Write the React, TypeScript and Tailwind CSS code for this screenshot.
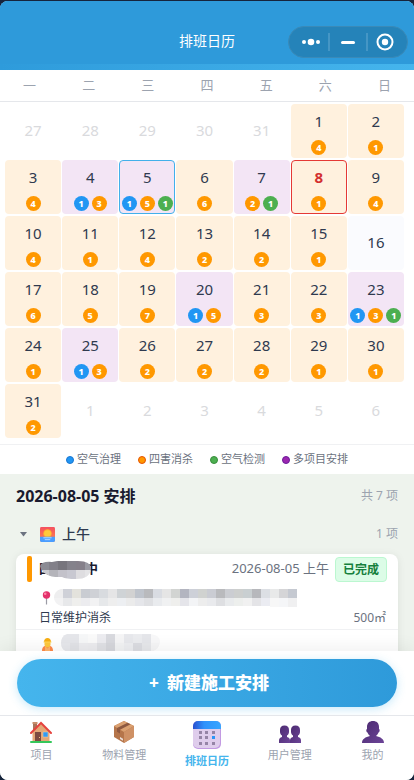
import React from "react";

type Kind = "air" | "pest" | "test";
type Tone = "out" | "none" | "single" | "multi";

type Day = {
  day: number;
  tone: Tone;
  badges: [Kind, number][];
  selected?: boolean;
  today?: boolean;
};

const weekdays = ["一", "二", "三", "四", "五", "六", "日"];

const out = (day: number): Day => ({ day, tone: "out", badges: [] });
const pest = (day: number, n: number): Day => ({ day, tone: "single", badges: [["pest", n]] });
const multi = (day: number, badges: [Kind, number][]): Day => ({ day, tone: "multi", badges });

const days: Day[] = [
  out(27), out(28), out(29), out(30), out(31), pest(1, 4), pest(2, 1),
  pest(3, 4),
  multi(4, [["air", 1], ["pest", 3]]),
  { ...multi(5, [["air", 1], ["pest", 5], ["test", 1]]), selected: true },
  pest(6, 6),
  multi(7, [["pest", 2], ["test", 1]]),
  { ...pest(8, 1), today: true },
  pest(9, 4),
  pest(10, 4), pest(11, 1), pest(12, 4), pest(13, 2), pest(14, 2), pest(15, 1),
  { day: 16, tone: "none", badges: [] },
  pest(17, 6), pest(18, 5), pest(19, 7),
  multi(20, [["air", 1], ["pest", 5]]),
  pest(21, 3), pest(22, 3),
  multi(23, [["air", 1], ["pest", 3], ["test", 1]]),
  pest(24, 1),
  multi(25, [["air", 1], ["pest", 3]]),
  pest(26, 2), pest(27, 2), pest(28, 2), pest(29, 1), pest(30, 1),
  pest(31, 2), out(1), out(2), out(3), out(4), out(5), out(6),
];

const badgeColor: Record<Kind, string> = {
  air: "bg-[#2196f3]",
  pest: "bg-[#ff9800]",
  test: "bg-[#4caf50]",
};

const toneColor: Record<Tone, string> = {
  out: "text-[#d9dadd]",
  none: "bg-[#fafbfe] text-[#2f3a4f]",
  single: "bg-[#fff1de] text-[#2f3a4f]",
  multi: "bg-[#f3e5f5] text-[#2f3a4f]",
};

const legend = [
  { label: "空气治理", color: "bg-[#2196f3] border-[#1976d2]" },
  { label: "四害消杀", color: "bg-[#ff9800] border-[#e65100]" },
  { label: "空气检测", color: "bg-[#4caf50] border-[#388e3c]" },
  { label: "多项目安排", color: "bg-[#9c27b0] border-[#6a1b9a]" },
];

function DayCell({ item }: { item: Day }) {
  const ring = item.today
    ? "border border-[#e53935] font-bold"
    : item.selected
      ? "border border-[#42b0ea]"
      : "border border-transparent";
  const color = item.today ? "bg-[#fff1de] text-[#d32f2f]" : toneColor[item.tone];
  return (
    <button
      type="button"
      className={`flex h-[54px] flex-col items-center rounded text-[15px] leading-5 ${ring} ${color} ${
        item.badges.length ? "justify-start pt-1.5" : "justify-center pb-[3px]"
      }`}
    >
      <span>{item.day}</span>
      {item.badges.length > 0 && (
        <span className="mt-[9px] flex gap-[3px]">
          {item.badges.map(([kind, n]) => (
            <span
              key={kind}
              className={`flex size-[15px] items-center justify-center rounded-full text-[9px] leading-none font-extrabold text-white ${badgeColor[kind]}`}
            >
              {n}
            </span>
          ))}
        </span>
      )}
    </button>
  );
}

function Mask({ cells, className, shape }: { cells: string[][]; className: string; shape: React.ReactNode }) {
  const id = React.useId();
  const w = cells[0].length * 9;
  return (
    <svg className={className} width={w} height="18" viewBox={`0 0 ${w} 18`} shapeRendering="crispEdges">
      <clipPath id={id}>{shape}</clipPath>
      <g clipPath={`url(#${id})`}>
        {cells.map((row, y) =>
          row.map((fill, x) => <rect key={`${x}-${y}`} x={x * 9} y={y * 9} width="9" height="9" fill={fill} />)
        )}
      </g>
    </svg>
  );
}

const nameCells = [
  ["#8b8b94", "#828089", "#77757d", "#84828b", "#85808a", "#9a9aa3"],
  ["#c9c9cf", "#b4b4ba", "#c3c2ca", "#c8c8d1", "#dedde0", "#e4e4e6"],
];

const addressCells = [
  [
    "#eeeeef", "#cfd1d8", "#e3e2dc", "#c9ccd2", "#cfd1d6", "#d8dbdf", "#e5e5e6", "#cfd3d6", "#d2d2d2",
    "#bfc4cc", "#b9babd", "#d9dce2", "#e5e5e5", "#d2d4d2", "#b3b5c0", "#cdd0d8", "#d0d2d0",
    "#caccd3", "#b9babd", "#cbcdd2", "#cdcfce", "#c9cfd1", "#b7b8bc", "#dcdfe4", "#e8e9e9", "#d5d5d7", "#c5c9d1",
  ],
  [
    "#f2f2f3", "#e7e8ea", "#efefed", "#ececef", "#f2f2f3", "#e6e8ea", "#eeeeee", "#edeff2", "#ebebeb",
    "#e5e6ea", "#dfe0e3", "#e9ebee", "#f0f1f2", "#efefed", "#e5e5ea", "#f3f4f6", "#ededed",
    "#e9eaed", "#dedfe2", "#e9ebed", "#edefed", "#f1f1f1", "#e4e4e7", "#ebecf2", "#f7f7f7", "#f5f6f8", "#f0f0f1",
  ],
];

const workerCells = [
  ["#e5e6ea", "#e5e6ea", "#f6f7f8", "#fafafa", "#ececf0", "#d8d9de", "#f5f5f6", "#e7e8ec", "#ebecef", "#e5e6ea", "#f8f8f9"],
  ["#e7e8ec", "#e2e3e7", "#ededf0", "#ececef", "#e0e1e5", "#d6d7dc", "#f2f3f4", "#edeef1", "#dcdde2", "#e7e8eb", "#f6f6f7"],
];

function Sunrise() {
  return (
    <svg width="15" height="15" viewBox="0 0 32 32" aria-hidden="true">
      <defs>
        <linearGradient id="sky" x1="0" y1="0" x2="0" y2="1">
          <stop offset="0" stopColor="#f4505f" />
          <stop offset="1" stopColor="#ff8a4c" />
        </linearGradient>
      </defs>
      <rect width="32" height="32" rx="3" fill="url(#sky)" />
      <circle cx="16" cy="14" r="9" fill="#ffb02e" />
      <circle cx="16" cy="14" r="7" fill="#ffc93c" />
      <path d="M0 21h32v8a3 3 0 0 1-3 3H3a3 3 0 0 1-3-3z" fill="#4a9dff" />
      <path d="M8 23h16M11 27h10" stroke="#b9dcff" strokeWidth="2" strokeLinecap="round" />
    </svg>
  );
}

function Pin() {
  return (
    <svg width="9" height="14" viewBox="0 0 9 14" aria-hidden="true">
      <path d="M4.5 6v7.5" stroke="#9b9ba5" strokeWidth="1.2" />
      <circle cx="4.5" cy="4" r="3.7" fill="#e3316b" />
      <circle cx="3.2" cy="2.8" r="1.3" fill="#ff86a8" />
    </svg>
  );
}

function Worker() {
  return (
    <svg width="11" height="13" viewBox="0 0 22 26" aria-hidden="true">
      <path d="M0 26c0-8 4-11 11-11s11 3 11 11z" fill="#ff8a4a" />
      <path d="M6 16l5 5 5-5v10H6z" fill="#ffb46b" />
      <path d="M5 8h12v5c0 4-3 6-6 6s-6-2-6-6z" fill="#ffc83d" />
      <path d="M4 8c0-5 3-8 7-8s7 3 7 8z" fill="#f7ae12" />
      <path d="M3 7h16v2H3z" fill="#ffd95a" />
    </svg>
  );
}

function House() {
  return (
    <svg width="22" height="22" viewBox="0 0 22 22" aria-hidden="true">
      <path d="M3 1h4v8H3z" fill="#a9745a" />
      <path d="M2.5 1h5v2h-5z" fill="#c78e6c" />
      <path d="M2.5 11L11 3l8.500 8v10h-17z" fill="#e3a876" />
      <path d="M1 12L11 2l10 10" fill="none" stroke="#e5433d" strokeWidth="2" strokeLinecap="round" />
      <path d="M5 11h6v9H5z" fill="#7d4b40" />
      <path d="M9 16h1v1H9z" fill="#f0c080" />
      <path d="M13 11h5v5h-5z" fill="#2f9cf4" stroke="#f2cfa5" strokeWidth="0.5" />
      <rect x="0" y="20" width="22" height="2" rx="1" fill="#35c75a" />
    </svg>
  );
}

function Box() {
  return (
    <svg width="22" height="22" viewBox="0 0 22 22" aria-hidden="true">
      <path d="M11 0l10 5v11l-10 6-10-6V5z" fill="#b5754a" />
      <path d="M11 0l10 5-10 6L1 5z" fill="#dba171" />
      <path d="M11 11l10-6v11l-10 6z" fill="#cf9165" />
      <path d="M14.5 1.800l3 1.500L7 8.700 4 7z" fill="#8e5940" />
      <path d="M4 6.700l3 1.900v4l-3-1.800z" fill="#8e5940" />
      <path d="M7 16l3 1.700v2L7 18z" fill="#eadfd9" />
    </svg>
  );
}

function CalendarIcon() {
  return (
    <svg width="28" height="28" viewBox="0 0 28 28" aria-hidden="true">
      <defs>
        <linearGradient id="calTop" x1="0" y1="0" x2="1" y2="0">
          <stop offset="0" stopColor="#2950cf" />
          <stop offset="0.4" stopColor="#3092fb" />
          <stop offset="1" stopColor="#38a6ff" />
        </linearGradient>
      </defs>
      <rect width="28" height="28" rx="5" fill="#c29ae2" />
      <rect width="27" height="27" rx="5" fill="#dfcdec" />
      <path d="M0 8V5a5 5 0 0 1 5-5h18a5 5 0 0 1 5 5v3z" fill="url(#calTop)" />
      {[10, 15, 21].map((y) =>
        [6, 12, 19].map((x) => (
          <rect key={`${x}-${y}`} x={x} y={y} width="3" height="3" fill={x === 19 && y === 15 ? "#2b95f7" : "#9584a6"} />
        ))
      )}
    </svg>
  );
}

function People() {
  return (
    <svg width="22" height="22" viewBox="0 0 22 22" aria-hidden="true">
      <defs>
        <linearGradient id="purple" x1="0" y1="0" x2="1" y2="1">
          <stop offset="0" stopColor="#4b2a70" />
          <stop offset="1" stopColor="#6c4497" />
        </linearGradient>
      </defs>
      <path d="M1 9c0-3 1.500-4.500 4.500-4.500S10 6 10 9v2c0 1.500-1 3-2 3.500v1.500c2 .5 3 1.500 3 3.500v2.500H0v-2.500c0-2 1-3 3-3.500v-1.500c-1-.5-2-2-2-3.500z" fill="url(#purple)" />
      <path d="M12 9c0-3 1.500-4.500 4.500-4.500S21 6 21 9v2c0 1.500-1 3-2 3.500v1.500c2 .5 3 1.500 3 3.500v2.500H11v-2.500c0-2 1-3 3-3.500v-1.500c-1-.5-2-2-2-3.500z" fill="url(#purple)" />
    </svg>
  );
}

function Person() {
  return (
    <svg width="22" height="22" viewBox="0 0 22 22" aria-hidden="true">
      <path d="M5 6c0-4 2.500-6 6-6s6 2 6 6v2c1 0 1 3-.5 3.500-.5 1.500-1.500 2.500-2.500 3.500 4.500 1 8 3 8 7H0c0-4 3.500-6 8-7-1-1-2-2-2.500-3.500C4 11 4 8 5 8z" fill="url(#purple)" />
    </svg>
  );
}

const tabs = [
  { label: "项目", icon: <House /> },
  { label: "物料管理", icon: <Box /> },
  { label: "排班日历", icon: <CalendarIcon />, active: true },
  { label: "用户管理", icon: <People /> },
  { label: "我的", icon: <Person /> },
];

function Header() {
  return (
    <header className="shrink-0 bg-linear-to-r from-[#2e9bdb] to-[#45b5ed] pb-1.5">
      <div className="relative flex h-[63px] items-center justify-center bg-[#2e9ada] pt-[17px]">
        <h1 className="text-sm text-white">排班日历</h1>
        <div className="absolute top-[25px] right-1.5 flex h-8 w-[120px] items-center rounded-full border border-[#3a8ab8] bg-[#2583b9]">
          <button type="button" aria-label="更多" className="flex flex-1 justify-center pl-1">
            <svg width="20" height="8" viewBox="0 0 20 8" fill="#fff">
              <circle cx="3" cy="4" r="2" />
              <circle cx="10" cy="4" r="3.3" />
              <circle cx="17" cy="4" r="2" />
            </svg>
          </button>
          <span className="h-[18px] w-0.5 bg-[#4596c5]" />
          <button type="button" aria-label="最小化" className="flex h-8 flex-1 items-center justify-center">
            <span className="h-[3px] w-3.5 rounded-full bg-white" />
          </button>
          <span className="h-[18px] w-0.5 bg-[#4596c5]" />
          <button type="button" aria-label="关闭" className="flex flex-1 justify-center pr-1">
            <svg width="18" height="18" viewBox="0 0 18 18">
              <circle cx="9" cy="9" r="7.5" fill="none" stroke="#fff" strokeWidth="2" />
              <circle cx="9" cy="9" r="3.2" fill="#fff" />
            </svg>
          </button>
        </div>
      </div>
    </header>
  );
}

export default function App() {
  return (
    <div className="h-screen bg-[#16243c] pt-px font-['Noto_Sans','Noto_Sans_CJK_SC',sans-serif]">
      <div className="flex h-full flex-col overflow-hidden rounded-lg bg-[#eef3ed]">
        <Header />

        <section className="shrink-0 bg-white">
          <div className="grid h-8 grid-cols-7 items-center border-b border-[#e5e7eb] text-center text-[13px] text-[#9ca3af]">
            {weekdays.map((d) => (
              <span key={d}>{d}</span>
            ))}
          </div>
          <div className="grid grid-cols-7 gap-x-px gap-y-0.5 pt-0.5 pr-[10px] pb-1.5 pl-[5px]">
            {days.map((item, i) => (
              <DayCell key={i} item={item} />
            ))}
          </div>
          <ul className="flex h-[30px] items-center justify-center gap-[17px] border-t border-[#f0f1f3] text-[11px] text-[#6b7280]">
            {legend.map((l) => (
              <li key={l.label} className="flex items-center gap-[3px]">
                <span className={`size-2 rounded-full border ${l.color}`} />
                {l.label}
              </li>
            ))}
          </ul>
        </section>

        <main className="min-h-0 flex-1 overflow-hidden px-4">
          <div className="flex h-11 items-center justify-between">
            <h2 className="text-base font-bold text-[#1a1a2e]">2026-08-05 安排</h2>
            <span className="text-xs text-[#9ca3af]">共 7 项</span>
          </div>
          <button type="button" className="flex h-8 w-full items-center">
            <svg className="mr-[13px] ml-1" width="7" height="6" viewBox="0 0 7 6" fill="#6b7280">
              <path d="M0 1h7L3.5 5.500z" />
            </svg>
            <Sunrise />
            <span className="ml-[7px] text-sm font-medium text-[#2f3a4f]">上午</span>
            <span className="ml-auto text-xs text-[#9ca3af]">1 项</span>
          </button>

          <article className="mt-1 h-60 rounded-lg bg-white shadow-[0_1px_8px_rgba(0,0,0,0.08)]">
            <div className="flex h-[30px] items-center px-[11px]">
              <span className="h-[26px] w-[5px] rounded-xs bg-[#ff9800]" />
              <span className="relative ml-1.5 flex h-5 w-[60px] items-center justify-between text-[13px] font-bold text-[#1a1a2e]">
                <span>日</span>
                <span>中</span>
                <Mask
                  className="absolute top-0.5 left-0.5"
                  cells={nameCells}
                  shape={<path d="M0 5Q2 0 12 1Q25 -2 38 0Q51 0 51 8Q50 18 36 18Q26 18 22 16Q3 17 0 5z" />}
                />
              </span>
              <span className="ml-auto text-[13px] text-[#6b7280]">2026-08-05 上午</span>
              <span className="ml-1.5 rounded border border-[#bbf7d0] bg-[#dcfce7] px-[7px] text-xs leading-[23px] font-bold text-[#15803d]">
                已完成
              </span>
            </div>
            <div className="flex items-center pt-[5px] pl-[26px]">
              <Pin />
              <Mask
                className="ml-[3px]"
                cells={addressCells}
                shape={<path d="M7 0H243V18H216V17H7Q0 14 0 9Q0 2 7 0z" />}
              />
            </div>
            <div className="flex h-[22px] items-center justify-between pr-3 pl-[23px] text-xs text-[#6b7280]">
              <span className="text-[#2f3a4f]">日常维护消杀</span>
              <span>500㎡</span>
            </div>
            <div className="flex items-start border-t border-[#f0f1f3] pt-1 pl-[26px]">
              <span className="pt-1">
                <Worker />
              </span>
              <Mask
                className="ml-2"
                cells={workerCells}
                shape={<path d="M6 0H90Q99 1 99 8Q98 17 88 18H8Q0 17 0 9Q0 2 6 0z" />}
              />
            </div>
          </article>
        </main>

        <div className="z-10 shrink-0 bg-white px-[17px] py-2 shadow-[0_-4px_16px_rgba(0,0,0,0.06)]">
          <button
            type="button"
            className="flex h-12 w-full items-center justify-center gap-2 rounded-full bg-linear-to-r from-[#45b5ed] to-[#2e9ada] pl-1 text-[17px] font-extrabold text-white shadow-[0_2px_10px_rgba(69,181,237,0.3)]"
          >
            <span>+</span>
            <span>新建施工安排</span>
          </button>
        </div>

        <nav className="z-10 grid h-[65px] shrink-0 grid-cols-5 border-t border-[#e5e7eb] bg-white">
          {tabs.map((tab) => (
            <a
              key={tab.label}
              href="#"
              className={`flex flex-col items-center gap-1 pt-[5px] text-[11px] leading-4 ${
                tab.active ? "font-bold text-[#45b5ed]" : "text-[#9ca3af]"
              }`}
            >
              {tab.icon}
              {tab.label}
            </a>
          ))}
        </nav>
      </div>
    </div>
  );
}
